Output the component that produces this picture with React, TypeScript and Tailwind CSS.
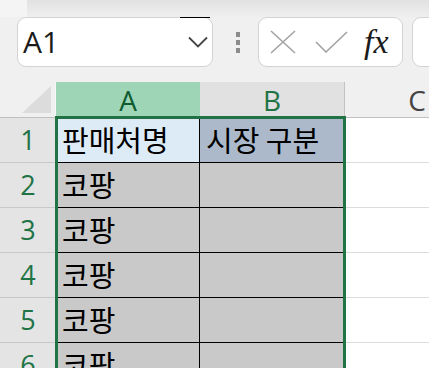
const rows = [
  { n: 1, a: "판매처명", b: "시장 구분" },
  { n: 2, a: "코팡", b: "" },
  { n: 3, a: "코팡", b: "" },
  { n: 4, a: "코팡", b: "" },
  { n: 5, a: "코팡", b: "" },
  { n: 6, a: "코팡", b: "" },
];

const ui = { fontFamily: '"Open Sans", "Noto Sans", sans-serif' };
const cellFont = { fontFamily: '"Noto Sans CJK KR", "Noto Sans", sans-serif' };

export default function App() {
  return (
    <div className="relative w-[429px] h-[368px] overflow-hidden bg-[#f0f0f0]" style={ui}>
      {/* ribbon edge */}
      <div className="flex h-[17px] bg-gradient-to-b from-[#e1e1e1] to-[#efefef]">
        <div className="w-[27px] bg-[#f4f4f4]" />
      </div>

      {/* name box + formula bar */}
      <div className="flex items-center h-[50px] pl-[17px]">
        <div className="relative flex items-center justify-between w-[196px] h-[50px] shrink-0 rounded-[9px] border border-[#d3d3d3] bg-white pl-[5px] pr-[4px]">
          <div className="absolute -top-px right-[2px] w-[30px] h-px bg-black" />
          <span className="text-[30px] leading-none text-[#1b1b1b]">A1</span>
          <svg width="20" height="12" viewBox="0 0 20 12">
            <path d="M1 1.5 L10 10.5 L19 1.5" stroke="#444" strokeWidth="1.8" fill="none" />
          </svg>
        </div>
        <div className="flex flex-col gap-[3px] ml-[23px] shrink-0">
          <div className="w-[4px] h-[5px] bg-[#8c8c8c]" />
          <div className="w-[4px] h-[5px] bg-[#8c8c8c]" />
          <div className="w-[4px] h-[5px] bg-[#8c8c8c]" />
        </div>
        <div className="flex items-center w-[145px] h-[50px] ml-[18px] shrink-0 rounded-[9px] border border-[#d3d3d3] bg-white">
          <svg width="26" height="24" viewBox="0 0 26 24" className="ml-[11px]">
            <path d="M1 1 L25 23 M25 1 L1 23" stroke="#a3a3a3" strokeWidth="1.6" fill="none" />
          </svg>
          <svg width="33" height="22" viewBox="0 0 33 22" className="ml-[19px]">
            <path d="M1 11 L11 21 L32 1" stroke="#a3a3a3" strokeWidth="1.6" fill="none" />
          </svg>
          <span
            className="ml-[16px] text-[34px] italic leading-none text-[#1b1b1b]"
            style={{ fontFamily: '"Liberation Serif", serif' }}
          >
            fx
          </span>
        </div>
        <div className="w-[60px] h-[50px] ml-[9px] shrink-0 rounded-[9px] border border-[#d3d3d3] bg-white" />
      </div>

      {/* sheet */}
      <div className="mt-[15px]">
        <div className="flex h-[36px]">
          <div className="relative w-[56px] shrink-0 border-b border-[#c0c0c0] border-r border-r-[#f7f7f7]">
            <svg width="30" height="28" viewBox="0 0 30 28" className="absolute right-[3px] bottom-[3px]">
              <polygon points="29,0 29,27 0,27" fill="#dcdcdc" />
            </svg>
          </div>
          <div className="flex items-center justify-center w-[144px] shrink-0 bg-[#9fd5b7] text-[28px] text-[#0e5c30]">
            A
          </div>
          <div className="flex items-center justify-center w-[145px] shrink-0 bg-[#e1e1e1] border-r border-[#c3c3c3] text-[28px] text-[#217346]">
            B
          </div>
          <div className="flex items-center justify-center w-[144px] shrink-0 border-b border-[#c0c0c0] text-[28px] text-[#444]">
            C
          </div>
        </div>

        {rows.map((r) => (
          <div key={r.n} className="flex h-[45px]">
            <div className="flex items-center justify-center w-[56px] shrink-0 bg-[#e4e4e4] border-b border-[#c8c8c8] text-[27px] text-[#217346]">
              {r.n}
            </div>
            <div
              className={`flex items-center w-[144px] shrink-0 pl-[6px] border-b border-r border-black text-[29px] text-black ${
                r.n === 1 ? "bg-[#ddebf7]" : "bg-[#c9c9c9]"
              }`}
              style={cellFont}
            >
              {r.a}
            </div>
            <div
              className={`flex items-center w-[145px] shrink-0 pl-[6px] border-b border-black text-[29px] text-black ${
                r.n === 1 ? "bg-[#acb9ca]" : "bg-[#c9c9c9]"
              }`}
              style={cellFont}
            >
              {r.b}
            </div>
            <div className="w-[144px] shrink-0 bg-white border-b border-[#dcdcdc]" />
          </div>
        ))}
      </div>

      {/* selection outline */}
      <div className="absolute left-[55px] top-[116px] w-[291px] h-[300px] border-[3px] border-[#217346]" />
    </div>
  );
}
